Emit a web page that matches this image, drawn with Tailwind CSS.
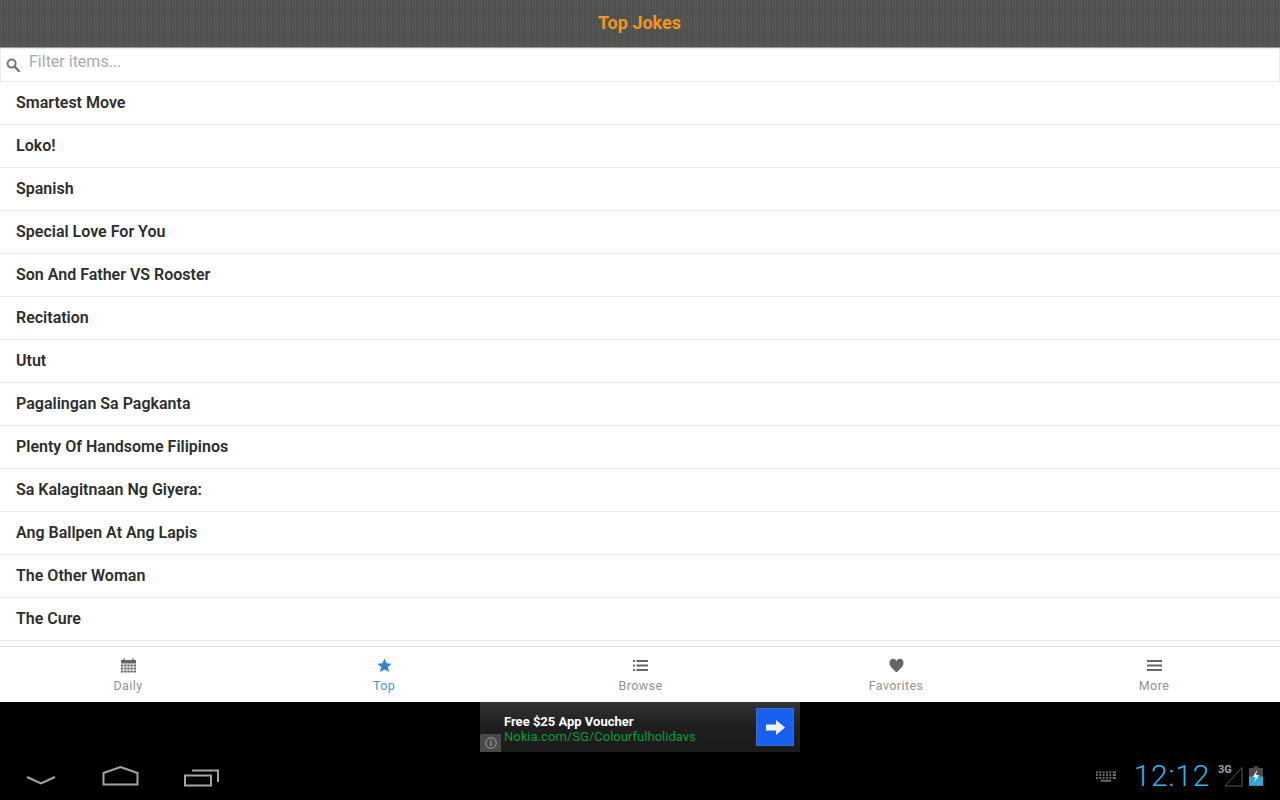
<!DOCTYPE html>
<html lang="en">
<head>
    <meta charset="UTF-8">
    <title>Top Jokes</title>
    <script src="https://cdn.jsdelivr.net/npm/@tailwindcss/browser@4"></script>
</head>
<body class="bg-black">
<div class="w-[1280px] h-[800px] flex flex-col overflow-hidden font-['Roboto',sans-serif]">

    <!-- Header -->
    <header class="h-12 shrink-0 flex items-center justify-center border-b border-[#9a9a9a] bg-[#4f514f] bg-[repeating-conic-gradient(#ffffff0c_0_25%,#0000000c_0_50%)] bg-[size:3px_3px]">
        <h1 class="text-[18px] font-bold text-[#f7931e] leading-none pb-0.5 pr-[1px]">Top Jokes</h1>
    </header>

    <!-- Filter -->
    <div class="h-[34px] shrink-0 flex items-center bg-white border border-[#ececec] pl-[5px]">
        <svg class="w-[14px] h-[14px] mb-[1px]" viewBox="0 0 14 14" fill="none" stroke="#777" stroke-width="2">
            <circle cx="5.6" cy="5.6" r="4"/>
            <path d="M8.6 8.6L13 13" stroke-linecap="round" stroke-width="2.4"/>
        </svg>
        <span class="ml-[9px] text-[16px] text-[#aaaaaa] leading-none pb-[6px]">Filter items...</span>
    </div>

    <!-- List -->
    <ul class="flex-1 min-h-0 overflow-hidden bg-white text-[16px] font-semibold text-[#2d2d2d]">
        <li class="h-[43px] flex items-center pl-4 border-b border-[#e8e8e8]">Smartest Move</li>
        <li class="h-[43px] flex items-center pl-4 border-b border-[#e8e8e8]">Loko!</li>
        <li class="h-[43px] flex items-center pl-4 border-b border-[#e8e8e8]">Spanish</li>
        <li class="h-[43px] flex items-center pl-4 border-b border-[#e8e8e8]">Special Love For You</li>
        <li class="h-[43px] flex items-center pl-4 border-b border-[#e8e8e8]">Son And Father VS Rooster</li>
        <li class="h-[43px] flex items-center pl-4 border-b border-[#e8e8e8]">Recitation</li>
        <li class="h-[43px] flex items-center pl-4 border-b border-[#e8e8e8]">Utut</li>
        <li class="h-[43px] flex items-center pl-4 border-b border-[#e8e8e8]">Pagalingan Sa Pagkanta</li>
        <li class="h-[43px] flex items-center pl-4 border-b border-[#e8e8e8]">Plenty Of Handsome Filipinos</li>
        <li class="h-[43px] flex items-center pl-4 border-b border-[#e8e8e8]">Sa Kalagitnaan Ng Giyera:</li>
        <li class="h-[43px] flex items-center pl-4 border-b border-[#e8e8e8]">Ang Ballpen At Ang Lapis</li>
        <li class="h-[43px] flex items-center pl-4 border-b border-[#e8e8e8]">The Other Woman</li>
        <li class="h-[43px] flex items-center pl-4 border-b border-[#e8e8e8]">The Cure</li>
    </ul>

    <!-- Tabs -->
    <nav class="h-[56px] shrink-0 grid grid-cols-5 bg-white border-t border-[#dcdcdc] text-[12.5px] tracking-[0.4px] text-[#919191]">
        <div class="flex flex-col items-center pt-[11px]">
            <svg class="w-[15px] h-[15px]" viewBox="0 0 15 15" fill="#666">
                <path d="M0 2h2.500V0.500h1.500V2h7V0.500h1.500V2H15v3.500H0z"/>
                <path d="M0 6.500h2.400v2H0zM3.200 6.500h2.400v2H3.200zM6.300 6.500h2.400v2H6.300zM9.400 6.500h2.400v2H9.400zM12.600 6.500H15v2h-2.400zM0 9.400h2.400v2H0zM3.200 9.400h2.400v2H3.200zM6.300 9.400h2.400v2H6.300zM9.400 9.400h2.400v2H9.400zM12.600 9.400H15v2h-2.400zM0 12.400h2.400v2H0zM3.200 12.400h2.400v2H3.200zM6.300 12.400h2.400v2H6.300zM9.400 12.400h2.400v2H9.400zM12.600 12.400H15v2h-2.400z"/>
            </svg>
            <span class="mt-[5px] leading-[15px]">Daily</span>
        </div>
        <div class="flex flex-col items-center pt-[11px] text-[#4a94d8]">
            <svg class="w-[15px] h-[15px]" viewBox="0 0 15 15" fill="#2f86d6">
                <path d="M7.500 0.500l2.100 4.700 5.100.5-3.800 3.400 1.100 5-4.500-2.600-4.500 2.600 1.100-5L.3 5.700l5.100-.5z"/>
            </svg>
            <span class="mt-[5px] leading-[15px]">Top</span>
        </div>
        <div class="flex flex-col items-center pt-[11px] pl-[1px]">
            <svg class="w-[15px] h-[15px]" viewBox="0 0 15 15" fill="#666">
                <path d="M0 2h2v2H0zM0 6.500h2v2H0zM0 11h2v2H0zM3.500 2H15v2H3.500zM3.500 6.500H15v2H3.500zM3.500 11H15v2H3.500z"/>
            </svg>
            <span class="mt-[5px] leading-[15px]">Browse</span>
        </div>
        <div class="flex flex-col items-center pt-[11px]">
            <svg class="w-[15px] h-[15px]" viewBox="0 0 15 15" fill="#666">
                <path d="M7.500 14.300C5 12 .7 8.800.5 5 .4 2.500 2 .8 4 .8c1.500 0 2.800.8 3.500 2.200C8.200 1.600 9.500.8 11 .8c2 0 3.600 1.700 3.500 4.200-.2 3.800-4.500 7-7 9.300z"/>
            </svg>
            <span class="mt-[5px] leading-[15px]">Favorites</span>
        </div>
        <div class="flex flex-col items-center pt-[11px] pl-[4px]">
            <svg class="w-[15px] h-[15px]" viewBox="0 0 15 15" fill="#666">
                <path d="M0 2h15v2H0zM0 6.500h15v2H0zM0 11h15v2H0z"/>
            </svg>
            <span class="mt-[5px] leading-[15px]">More</span>
        </div>
    </nav>

    <!-- Ad + system bar -->
    <div class="h-[98px] shrink-0 bg-black flex flex-col">
        <div class="relative w-[320px] h-[50px] mx-auto shrink-0 overflow-hidden bg-[linear-gradient(#333333,#1f1f1f_50%,#1a1a1a)] flex items-center">
            <div class="ml-6 w-[245px] h-[39px] self-start overflow-hidden pt-[12px]">
                <p class="text-[13px] font-bold text-white leading-[16px]">Free $25 App Voucher</p>
                <p class="text-[13px] tracking-[0.03px] text-[#0a9a3a] leading-[14px]">Nokia.com/SG/Colourfulholidays</p>
            </div>
            <div class="ml-[7px] w-[38px] h-[38px] bg-[#1560ee] border border-[#3a6fd0] flex items-center justify-center">
                <svg class="w-[19px] h-[15px]" viewBox="0 0 19 15" fill="#f2f2f2"><path d="M0 4.500h10V0l9 7.500-9 7.500v-4.500H0z"/></svg>
            </div>
            <div class="absolute left-0 bottom-0 w-[21px] h-[18px] bg-[#4a4a4a] rounded-tl-[2px] flex items-center justify-center">
                <svg class="w-[12px] h-[12px]" viewBox="0 0 12 12" fill="none" stroke="#a0a0a0"><circle cx="6" cy="6" r="5.300"/><path d="M6 5v4M6 3v1.200" stroke-width="1.300"/></svg>
            </div>
        </div>

        <div class="flex-1 flex items-center justify-between">
            <div class="flex items-center pl-[26px] gap-[45px] h-full">
                <svg class="w-[30px] h-[12px] mt-[7px]" viewBox="0 0 30 12" fill="none" stroke="#a4a4a4" stroke-width="2"><path d="M1 3l14 6.500L29 3"/></svg>
                <svg class="w-[37px] h-[20px] ml-[1px] mb-[1px]" viewBox="0 0 37 20" fill="none" stroke="#a4a4a4" stroke-width="2"><path d="M1.500 18.500V7L18.500 1l17 6v11.500z"/></svg>
                <svg class="w-[35px] h-[18px] mt-[3px]" viewBox="0 0 35 18" fill="none" stroke="#a4a4a4" stroke-width="2"><path d="M1 6.500h26v10H1z"/><path d="M8 1.500h26V13"/></svg>
            </div>
            <div class="flex items-center h-full pr-[17px]">
                <svg class="w-[20px] h-[11px] mt-[1px]" viewBox="0 0 21 11" fill="#6a6a6a"><path d="M0 0h2v2H0zM3.500 0h2v2h-2zM7 0h2v2H7zM10.500 0h2v2h-2zM14 0h2v2h-2zM17.500 0H21v2h-3.500zM0 3h2v2H0zM3.500 3h2v2h-2zM7 3h2v2H7zM10.500 3h2v2h-2zM14 3h2v2h-2zM17.500 3H21v2h-3.500zM0 6h2v2H0zM3.500 6h2v2h-2zM7 6h2v2H7zM10.500 6h2v2h-2zM14 6h2v2h-2zM17.500 6H21v2h-3.500zM5 9h11v2H5z"/></svg>
                <span class="ml-[18px] text-[30px] leading-none tracking-[0.7px] font-light text-[#33b5e5]">12:12</span>
                <div class="relative ml-[8px] w-[25px] h-[20px]">
                    <span class="absolute left-0 top-[-2px] text-[11px] font-bold text-[#a0a0a0] leading-[12px]">3G</span>
                    <svg class="absolute left-[6px] top-0 w-[19px] h-[21px]" viewBox="0 0 19 21" fill="none" stroke="#5a5a5a" stroke-width="1"><path d="M18 1.500V20H1z"/></svg>
                </div>
                <svg class="ml-[6px] w-[14px] h-[20px]" viewBox="0 0 15 21">
                    <path d="M5 0h5v2h5v19H0V2h5z" fill="#4a4a4a"/>
                    <path d="M0 11h15v10H0z" fill="#33a5d5"/>
                    <path d="M9 3.500L4 11.500h3l-1.500 6 5.500-8H7.500z" fill="#eeeeee"/>
                </svg>
            </div>
        </div>
    </div>
</div>
</body>
</html>
